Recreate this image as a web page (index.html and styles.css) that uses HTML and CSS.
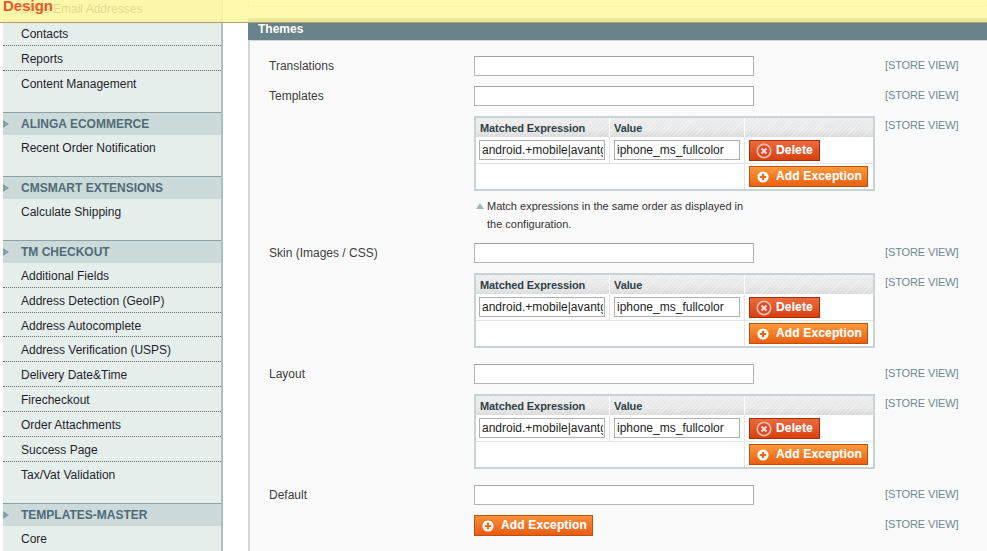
FILE: index.html
```html
<!DOCTYPE html>
<html lang="en">
<head>
<meta charset="utf-8">
<title>Design</title>
<link rel="stylesheet" href="styles.css">
</head>
<body>
<svg class="defs" width="0" height="0" aria-hidden="true">
  <symbol id="plus" viewBox="0 0 12 12"><circle cx="6" cy="6" r="5.6" fill="#fff"/><path d="M6 2.8v6.4M2.8 6h6.4" stroke="#ee6a1c" stroke-width="2.2"/></symbol>
  <symbol id="cross" viewBox="0 0 16 16"><circle cx="8" cy="8" r="7.6" fill="#f5b9a4"/><circle cx="8" cy="8" r="5.8" fill="#d8492a"/><path d="M5.5 5.5l5 5M10.5 5.5l-5 5" stroke="#fbd9cd" stroke-width="2.2"/></symbol>
</svg>
<div class="sticky">
  <span class="sticky-title">Design</span>
</div>
<div class="page">
  <nav class="sidebar">
    <div class="section section-first">
      <a class="item">Store Email Addresses</a>
      <a class="item">Contacts</a>
      <a class="item">Reports</a>
      <a class="item">Content Management</a>
    </div>
    <div class="section">
      <h3 class="head">ALINGA ECOMMERCE</h3>
      <a class="item">Recent Order Notification</a>
    </div>
    <div class="section">
      <h3 class="head">CMSMART EXTENSIONS</h3>
      <a class="item">Calculate Shipping</a>
    </div>
    <div class="section">
      <h3 class="head">TM CHECKOUT</h3>
      <a class="item">Additional Fields</a>
      <a class="item">Address Detection (GeoIP)</a>
      <a class="item">Address Autocomplete</a>
      <a class="item">Address Verification (USPS)</a>
      <a class="item">Delivery Date&amp;Time</a>
      <a class="item">Firecheckout</a>
      <a class="item">Order Attachments</a>
      <a class="item">Success Page</a>
      <a class="item">Tax/Vat Validation</a>
    </div>
    <div class="section">
      <h3 class="head">TEMPLATES-MASTER</h3>
      <a class="item">Core</a>
    </div>
  </nav>
  <main class="main">
    <div class="prev-panel"></div>
    <h2 class="panel-head">Themes</h2>
    <div class="panel-body">
      <div class="row">
        <label class="lbl">Translations</label>
        <input class="field" type="text">
        <span class="scope">[STORE VIEW]</span>
      </div>
      <div class="row">
        <label class="lbl">Templates</label>
        <input class="field" type="text">
        <span class="scope">[STORE VIEW]</span>
      </div>
      <div class="row">
        <span class="lbl"></span>
        <div class="value">
          <table class="ex">
            <thead><tr><th>Matched Expression</th><th>Value</th><th></th></tr></thead>
            <tbody>
              <tr>
                <td><input class="cell" type="text" value="android.+mobile|avantgo|bada"></td>
                <td><input class="cell" type="text" value="iphone_ms_fullcolor"></td>
                <td><button class="btn btn-del"><svg class="ico-del"><use href="#cross"/></svg>Delete</button></td>
              </tr>
              <tr>
                <td colspan="2"></td>
                <td><button class="btn btn-add"><svg class="ico"><use href="#plus"/></svg>Add Exception</button></td>
              </tr>
            </tbody>
          </table>
          <p class="note">Match expressions in the same order as displayed in the configuration.</p>
        </div>
        <span class="scope">[STORE VIEW]</span>
      </div>
      <div class="row">
        <label class="lbl">Skin (Images / CSS)</label>
        <input class="field" type="text">
        <span class="scope">[STORE VIEW]</span>
      </div>
      <div class="row row-gap">
        <span class="lbl"></span>
        <div class="value">
          <table class="ex">
            <thead><tr><th>Matched Expression</th><th>Value</th><th></th></tr></thead>
            <tbody>
              <tr>
                <td><input class="cell" type="text" value="android.+mobile|avantgo|bada"></td>
                <td><input class="cell" type="text" value="iphone_ms_fullcolor"></td>
                <td><button class="btn btn-del"><svg class="ico-del"><use href="#cross"/></svg>Delete</button></td>
              </tr>
              <tr>
                <td colspan="2"></td>
                <td><button class="btn btn-add"><svg class="ico"><use href="#plus"/></svg>Add Exception</button></td>
              </tr>
            </tbody>
          </table>
        </div>
        <span class="scope">[STORE VIEW]</span>
      </div>
      <div class="row">
        <label class="lbl">Layout</label>
        <input class="field" type="text">
        <span class="scope">[STORE VIEW]</span>
      </div>
      <div class="row row-gap">
        <span class="lbl"></span>
        <div class="value">
          <table class="ex">
            <thead><tr><th>Matched Expression</th><th>Value</th><th></th></tr></thead>
            <tbody>
              <tr>
                <td><input class="cell" type="text" value="android.+mobile|avantgo|bada"></td>
                <td><input class="cell" type="text" value="iphone_ms_fullcolor"></td>
                <td><button class="btn btn-del"><svg class="ico-del"><use href="#cross"/></svg>Delete</button></td>
              </tr>
              <tr>
                <td colspan="2"></td>
                <td><button class="btn btn-add"><svg class="ico"><use href="#plus"/></svg>Add Exception</button></td>
              </tr>
            </tbody>
          </table>
        </div>
        <span class="scope">[STORE VIEW]</span>
      </div>
      <div class="row">
        <label class="lbl">Default</label>
        <input class="field" type="text">
        <span class="scope">[STORE VIEW]</span>
      </div>
      <div class="row">
        <span class="lbl"></span>
        <div class="value"><button class="btn btn-add btn-solo"><svg class="ico"><use href="#plus"/></svg>Add Exception</button></div>
        <span class="scope">[STORE VIEW]</span>
      </div>
    </div>
  </main>
</div>
</body>
</html>
```

FILE: styles.css
```css
* { box-sizing: border-box; }
html, body { margin: 0; padding: 0; height: 100%; overflow: hidden; background: #fff; }
body { font-family: "Liberation Sans", Arial, sans-serif; font-size: 12px; color: #2f2f2f; }
.defs { position: absolute; }

.sticky {
  position: absolute; top: 0; left: 0; right: 0; height: 23px; z-index: 5;
  background: rgba(255, 248, 160, .86);
  border-bottom: 1px solid #aca268;
}
.sticky-title {
  position: absolute; left: 3px; top: -3px;
  font-size: 15px; line-height: 18px; font-weight: bold; color: #eb5b2c;
}

.page { display: flex; margin-top: -4px; height: 555px; }

.sidebar {
  flex: none; width: 220px; margin-left: 3px; height: 100%;
  background: #e6eeec; border-right: 2px solid #afbfc0;
}
.section { padding-bottom: 16px; }
.head {
  margin: 0; height: 23px; padding-left: 18px;
  border-top: 1px solid #8ca0a6; background: #cddada;
  font-size: 12px; line-height: 22px; font-weight: bold; color: #4f6b78;
  position: relative;
}
.head::before {
  content: ""; position: absolute; left: 0; top: 7px;
  border-left: 6px solid #8a9da3; border-top: 4px solid transparent; border-bottom: 4px solid transparent;
}
.item {
  display: block; height: 24.94px; padding-left: 18px;
  font-size: 12px; line-height: 26px; color: #1f1f2a;
  border-bottom: 1px dotted #666;
}
.item:last-child { border-bottom: 0; }

.main { flex: 1; min-width: 0; margin-left: 25px; }
.prev-panel { height: 11px; border: 1px solid #e3e3e3; border-top: 0; background: #fafafa; }
.panel-head {
  margin: 11px 0 0; height: 22px; padding-left: 10px;
  background: #6a8289; color: #fff;
  font-size: 12px; line-height: 22px; font-weight: bold;
}
.panel-body {
  padding: 15px 0 0 19px; height: 520px;
  background: #fafafa; border-top: 1px solid #d6d6d6; border-left: 2px solid #d6d6d6;
}
.row { display: grid; grid-template-columns: 205px 411px 1fr; min-height: 20px; margin-bottom: 10px; }
.row-gap { margin-bottom: 16px; }
.lbl { font-size: 12px; line-height: 20px; color: #3d3d3d; }
.field { width: 280px; height: 20px; margin: 0; padding: 2px; background: #fff; border: 1px solid #b4b4b4; border-top-color: #a4a4a4; }
.scope { font-size: 11px; line-height: 19px; color: #6f8992; letter-spacing: -.12px; }

.value { min-width: 0; }
.ex {
  display: table; width: 401px; table-layout: fixed; border-collapse: separate; border-spacing: 0;
  border: 2px solid #c9d2d5; background: #fff;
}
.ex th {
  height: 19px; padding: 1px 0 0 4px; text-align: left;
  font-size: 11px; line-height: 18px; font-weight: bold; color: #2f3f47; letter-spacing: -.1px;
  border-right: 1px solid #fff;
  background:
    repeating-linear-gradient(135deg, rgba(255,255,255,.3) 0 1px, rgba(255,255,255,0) 1px 3px),
    linear-gradient(#ececec 0, #e8e8e8 60%, #d9d9d9 100%);
}
.ex th:first-child { width: 134px; }
.ex th:nth-child(2) { width: 135px; }
.ex th:last-child { border-right: 0; }
.ex td { height: 27px; padding: 3px 4px 0; border-right: 1px solid #e2e6e7; border-bottom: 1px solid #e2e6e7; vertical-align: top; }
.ex td:first-child { padding-left: 3px; }
.ex td:last-child { border-right: 0; }
.ex tr:last-child td { height: 25px; padding-top: 2px; border-bottom: 0; }
.cell {
  display: block; width: 126px; height: 20px; margin: 0; padding: 0 1px 0 2px;
  font: 12px/18px "Liberation Sans", Arial, sans-serif; color: #222;
  background: #fff; border: 1px solid #b0b0b0;
}
.btn {
  display: flex; align-items: center; height: 21px; margin: 0; padding: 0;
  font: bold 12px/19px "Liberation Sans", Arial, sans-serif; color: #fff; letter-spacing: .15px;
  text-shadow: 0 0 1px rgba(255,255,255,.35);
}
.btn-del {
  width: 71px; padding-left: 6px;
  background: linear-gradient(#ea6b3f, #d9400f); border: 1px solid #a82c05;
}
.btn-add {
  width: 119px; padding-left: 7px;
  background: linear-gradient(#fb9a3c, #ec5f10); border: 1px solid #c0500e;
}
.btn-solo { background: linear-gradient(#f8903a, #e95c12); }
.ico { width: 12px; height: 12px; margin-right: 7px; flex: none; }
.ico-del { width: 16px; height: 16px; margin-right: 4px; flex: none; }
.note {
  position: relative; width: 272px; margin: 6px 0 0; padding-left: 13px;
  font-size: 11px; line-height: 18px; color: #333;
}
.note::before {
  content: ""; position: absolute; left: 2px; top: 6px;
  border-bottom: 6px solid #a5b3b8; border-left: 4px solid transparent; border-right: 4px solid transparent;
}
```
